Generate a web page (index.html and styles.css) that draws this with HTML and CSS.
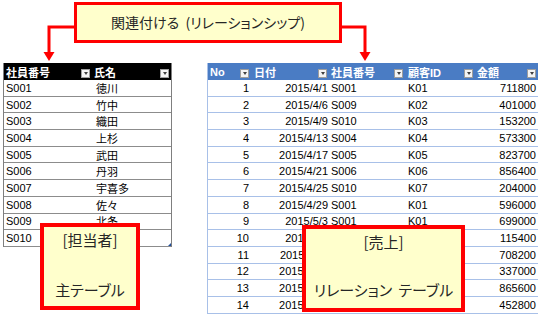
FILE: index.html
```html
<!DOCTYPE html>
<html lang="ja">
<head>
<meta charset="utf-8">
<title>リレーションシップ</title>
<link rel="stylesheet" href="styles.css">
</head>
<body>
<div class="page">
  <div class="top">
    <div class="title">関連付ける (リレーションシップ)</div>
    <svg class="arrows" width="540" height="63" viewBox="0 0 540 63">
      <polyline points="75,27 49,27 49,53" fill="none" stroke="#ff0000" stroke-width="3"/>
      <polygon points="43.5,52 54.5,52 49,61" fill="#ff0000"/>
      <polyline points="341,27 365,27 365,53" fill="none" stroke="#ff0000" stroke-width="3"/>
      <polygon points="359.5,52 370.5,52 365,61" fill="#ff0000"/>
    </svg>
  </div>

  <div class="tables">
    <div class="tbl tbl-left">
      <div class="row head">
        <div class="cell">社員番号<span class="dd"></span></div>
        <div class="cell">氏名<span class="dd"></span></div>
      </div>
      <div class="row"><div class="cell">S001</div><div class="cell c2">徳川</div></div>
      <div class="row"><div class="cell">S002</div><div class="cell c2">竹中</div></div>
      <div class="row"><div class="cell">S003</div><div class="cell c2">織田</div></div>
      <div class="row"><div class="cell">S004</div><div class="cell c2">上杉</div></div>
      <div class="row"><div class="cell">S005</div><div class="cell c2">武田</div></div>
      <div class="row"><div class="cell">S006</div><div class="cell c2">丹羽</div></div>
      <div class="row"><div class="cell">S007</div><div class="cell c2">宇喜多</div></div>
      <div class="row"><div class="cell">S008</div><div class="cell c2">佐々</div></div>
      <div class="row"><div class="cell">S009</div><div class="cell c2">北条</div></div>
      <div class="row"><div class="cell">S010</div><div class="cell c2">前田</div></div>
    </div>

    <div class="tbl tbl-right">
      <div class="row head">
        <div class="cell">No<span class="dd"></span></div>
        <div class="cell">日付<span class="dd"></span></div>
        <div class="cell">社員番号<span class="dd"></span></div>
        <div class="cell">顧客ID<span class="dd"></span></div>
        <div class="cell">金額<span class="dd"></span></div>
      </div>
      <div class="row"><div class="cell r">1</div><div class="cell r d">2015/4/1</div><div class="cell">S001</div><div class="cell k">K01</div><div class="cell r">711800</div></div>
      <div class="row"><div class="cell r">2</div><div class="cell r d">2015/4/6</div><div class="cell">S009</div><div class="cell k">K02</div><div class="cell r">401000</div></div>
      <div class="row"><div class="cell r">3</div><div class="cell r d">2015/4/9</div><div class="cell">S010</div><div class="cell k">K03</div><div class="cell r">153200</div></div>
      <div class="row"><div class="cell r">4</div><div class="cell r d">2015/4/13</div><div class="cell">S004</div><div class="cell k">K04</div><div class="cell r">573300</div></div>
      <div class="row"><div class="cell r">5</div><div class="cell r d">2015/4/17</div><div class="cell">S005</div><div class="cell k">K05</div><div class="cell r">823700</div></div>
      <div class="row"><div class="cell r">6</div><div class="cell r d">2015/4/21</div><div class="cell">S006</div><div class="cell k">K06</div><div class="cell r">856400</div></div>
      <div class="row"><div class="cell r">7</div><div class="cell r d">2015/4/25</div><div class="cell">S010</div><div class="cell k">K07</div><div class="cell r">204000</div></div>
      <div class="row"><div class="cell r">8</div><div class="cell r d">2015/4/29</div><div class="cell">S001</div><div class="cell k">K01</div><div class="cell r">596000</div></div>
      <div class="row"><div class="cell r">9</div><div class="cell r d">2015/5/3</div><div class="cell">S001</div><div class="cell k">K01</div><div class="cell r">699000</div></div>
      <div class="row"><div class="cell r">10</div><div class="cell r d">2015/5/7</div><div class="cell">S003</div><div class="cell k">K02</div><div class="cell r">115400</div></div>
      <div class="row"><div class="cell r">11</div><div class="cell r d">2015/5/11</div><div class="cell">S002</div><div class="cell k">K03</div><div class="cell r">708200</div></div>
      <div class="row"><div class="cell r">12</div><div class="cell r d">2015/5/15</div><div class="cell">S007</div><div class="cell k">K04</div><div class="cell r">337000</div></div>
      <div class="row"><div class="cell r">13</div><div class="cell r d">2015/5/19</div><div class="cell">S008</div><div class="cell k">K05</div><div class="cell r">865600</div></div>
      <div class="row"><div class="cell r">14</div><div class="cell r d">2015/5/23</div><div class="cell">S006</div><div class="cell k">K06</div><div class="cell r">452800</div></div>
    </div>
  </div>

  <div class="callout callout-left"><span>[担当者]</span><span>主テーブル</span></div>
  <div class="callout callout-right"><span>[売上]</span><span>リレーション テーブル</span></div>
</div>
</body>
</html>
```

FILE: styles.css
```css
html, body {
  margin: 0;
  padding: 0;
  background: #ffffff;
}

.page {
  position: relative;
  width: 540px;
  height: 315px;
  overflow: hidden;
  background: #ffffff;
  font-family: "Liberation Sans", "Noto Sans CJK JP", sans-serif;
  color: #000000;
}

/* top title + arrows */
.top {
  position: relative;
  height: 63px;
  padding-top: 2px;
  box-sizing: border-box;
}

.title {
  margin-left: 74px;
  width: 268px;
  height: 41px;
  box-sizing: border-box;
  border: 3px solid #ff0000;
  background: #ffffcc;
  display: flex;
  align-items: center;
  justify-content: center;
  padding-bottom: 2px;
  font-family: "Noto Sans CJK JP", sans-serif;
  font-feature-settings: "palt";
  font-size: 14px;
  word-spacing: 3px;
  color: #262626;
}

.arrows {
  position: absolute;
  left: 0;
  top: 0;
}

/* tables */
.tables {
  display: flex;
  align-items: flex-start;
}

.tbl {
  font-size: 11px;
}

.row {
  display: grid;
  height: 16.7px;
  box-sizing: border-box;
  align-items: center;
}

.row.head {
  height: 17px;
  font-weight: bold;
  color: #ffffff;
}

.cell {
  display: flex;
  align-items: center;
  height: 100%;
  padding: 0 2px;
  white-space: nowrap;
  overflow: hidden;
  box-sizing: border-box;
}

.head .cell {
  justify-content: space-between;
  padding-right: 2px;
}

.cell.r {
  justify-content: flex-end;
}

/* dropdown buttons */
.dd {
  width: 9px;
  height: 9px;
  box-sizing: border-box;
  border: 1px solid #9d9d9d;
  background: #f4f4f4;
  display: flex;
  align-items: center;
  justify-content: center;
  margin-top: 3px;
  flex: none;
}

.dd::after {
  content: "";
  width: 0;
  height: 0;
  border-left: 2.5px solid transparent;
  border-right: 2.5px solid transparent;
  border-top: 3px solid #404040;
}

/* left table */
.tbl-left {
  position: relative;
  margin-left: 3px;
  width: 169px;
  box-sizing: border-box;
  border-left: 1px solid #7f7f7f;
  border-right: 1px solid #7f7f7f;
}

.tbl-left .row {
  grid-template-columns: 88px 79px;
  border-bottom: 1px solid #8c8c8c;
}

.tbl-left .row.head {
  background: #000000;
  border-bottom: none;
}

.tbl-left .c2 {
  padding-left: 4px;
}

.tbl-left::after {
  content: "";
  position: absolute;
  right: 0;
  bottom: 1px;
  width: 0;
  height: 0;
  border-left: 3px solid transparent;
  border-bottom: 3px solid #1f4e9c;
}

/* right table */
.tbl-right {
  margin-left: 35px;
  width: 331px;
  box-sizing: border-box;
  border-left: 1px solid #a8c0e8;
}

.tbl-right .row {
  grid-template-columns: 43px 78px 76px 70px 63px;
  border-bottom: 1px solid #a8c0e8;
}

.tbl-right .row.head {
  background: #4a7cc4;
  border-bottom: none;
}

.tbl-right .cell.d {
  padding-right: 1px;
}

.tbl-right .cell.k {
  padding-left: 3px;
}

.tbl-right .head .cell:nth-child(2),
.tbl-right .head .cell:nth-child(4) {
  padding-left: 3px;
}

/* callouts */
.callout {
  position: absolute;
  box-sizing: border-box;
  border: 4px solid #ff0000;
  background: #ffffcc;
  display: flex;
  flex-direction: column;
  align-items: center;
  justify-content: space-between;
  font-family: "Noto Sans CJK JP", sans-serif;
  font-feature-settings: "palt";
  font-size: 15px;
  line-height: 20px;
  word-spacing: 3px;
  color: #262626;
}

.callout-left {
  left: 40px;
  top: 223px;
  width: 100px;
  height: 87px;
  padding: 3px 0 6px;
}

.callout-right {
  left: 302px;
  top: 225px;
  width: 163px;
  height: 87px;
  padding: 3px 0 8px;
}
```
